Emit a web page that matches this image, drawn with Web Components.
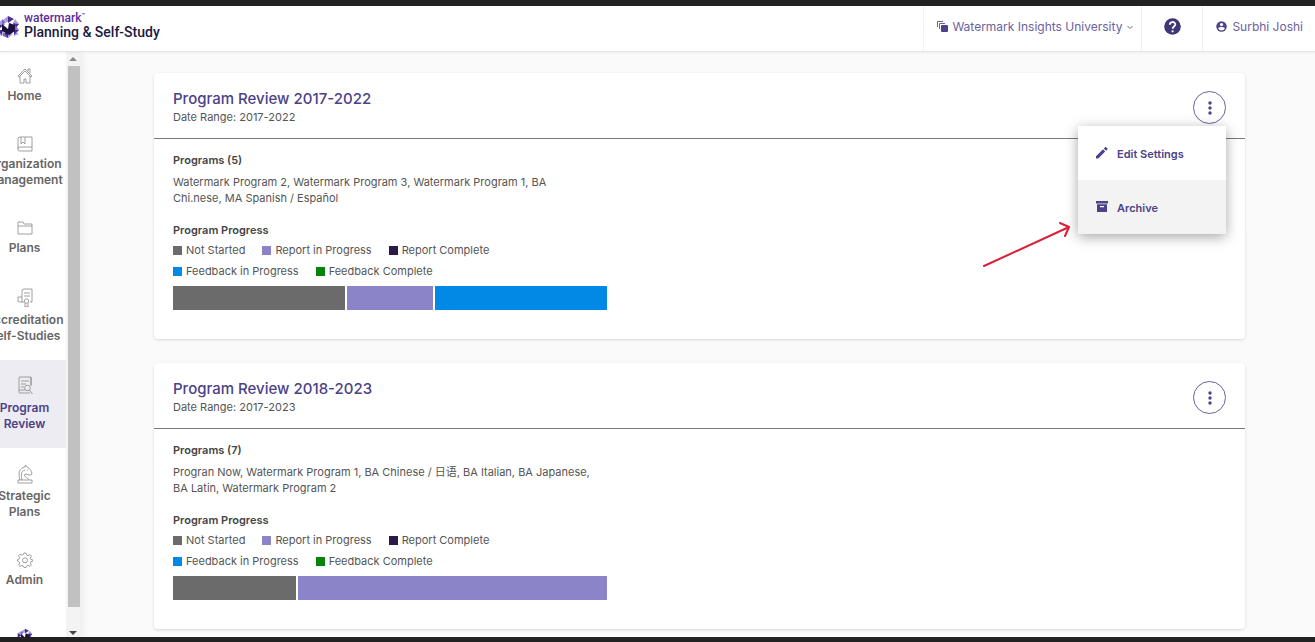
<!DOCTYPE html>
<html lang="en">
<head>
<meta charset="utf-8">
<meta name="viewport" content="width=device-width, initial-scale=1">
<title>Planning &amp; Self-Study</title>
<style>
    * {
        box-sizing: border-box;
    }

    body {
        margin: 0;
        font-family: Inter, "Noto Sans CJK SC", sans-serif;
        font-size: 12px;
        line-height: 16px;
        color: #555;
        --purple: #4b4288;
        --purple-light: #6a629e;
    }
</style>
</head>
<body>

<app-shell>
    <app-header slot="header" university="Watermark Insights University" user="Surbhi Joshi"></app-header>

    <side-nav slot="nav">
        <nav-item icon="home">Home</nav-item>
        <nav-item icon="book">Organization Management</nav-item>
        <nav-item icon="folder">Plans</nav-item>
        <nav-item icon="certificate" tall>Accreditation Self-Studies</nav-item>
        <nav-item icon="review" tall active>Program Review</nav-item>
        <nav-item icon="knight" tall>Strategic Plans</nav-item>
        <nav-item icon="gear">Admin</nav-item>
        <nav-item icon="logo" last></nav-item>
    </side-nav>

    <review-card title-text="Program Review 2017-2022" range="2017-2022" count="5" progress="not-started:2,report:1,feedback:2">
        <span slot="programs">Watermark Program 2, Watermark Program 3, Watermark Program 1, BA<br>Chi.nese, MA Spanish / Español</span>
        <action-menu slot="actions" open></action-menu>
        <arrow-note slot="note"></arrow-note>
    </review-card>

    <review-card title-text="Program Review 2018-2023" range="2017-2023" count="7" progress="not-started:2,report:5">
        <span slot="programs">Progran Now, Watermark Program 1, BA Chinese / 日语, BA Italian, BA Japanese,<br>BA Latin, Watermark Program 2</span>
        <action-menu slot="actions"></action-menu>
    </review-card>
</app-shell>

<script>
const logo = `
    <svg viewBox="0 0 24 24" width="100%" height="100%" aria-hidden="true">
        <path fill="#a79fd8" d="M7 5l5-4v7zM19 4l4 5-6-1zM1 8l5-3 1 6zM1 19l5-3v5zM18 16l5 3-5 2zM12 23l5-4-5-2z"/>
        <path fill="#4b2a96" d="M12 1l6 3-6 4zM17 8l6 1-4 5zM1 8l6 3-6 4zM7 15l-6 0 5 5zM12 23l-6-3 6-4zM18 14l5 1-5 5z"/>
        <path fill="#7d6bc0" d="M6 4l5 4-5 3zM19 10l4 5-5-1zM7 17l5 6-5-2z"/>
        <path fill="#1b0f3c" d="M6 9l6 5 1-6 6 2v6l-6 4-7-4z"/>
        <path fill="#fff" d="M8 8l4-1v5z"/>
    </svg>`;

const icons = {
    home: `<path d="M1 8l7-7 7 7-1 1-6-6-6 6zM3 8v7h4v-4h2v4h4V8M11 3V1h2v4"/>`,
    book: `<path d="M3 1h12v14H2.500a1.500 1.500 0 0 1-1.500-1.500V3a2 2 0 0 1 2-2zM4 1v7l2-2 2 2V1M15 11H3a2 2 0 0 0-2 2"/>`,
    folder: `<path d="M1 14V2h5l1 2h8v10zM1 6h14"/>`,
    certificate: `<path d="M7 14H2a1 1 0 0 1-1-1V9h4V3a2 2 0 0 1 2-2h8v13h-2M5 9v5M7 5h6M7 8h6"/><circle cx="9.500" cy="13" r="2.200"/><path d="M8 15v4l1.500-1 1.500 1v-4"/>`,
    review: `<path d="M14 9V1H3a1 1 0 0 0-1 1v14a1 1 0 0 0 1 1h10M14 1v9M4 5h8M4 8h5M4 11h3M2 14h6"/><circle cx="10.500" cy="12" r="2.800"/><path d="M12.500 14l3 4"/>`,
    knight: `<path d="M1 19v-3h14v3zM3 16c-2-7-1-12 5-13l.5-2 1.500 2c3 1 4 4 5 6l-1 2-2 0-3-1-2 1c1 2 4 3 5 5M5 16c-1-5-1-9 3-10M10 6h1"/>`,
    gear: `<path d="M7 1h2l.6 2 1.400.6L13 2.600 14.400 4l-1 2 .6 1.400 2 .6v1l-2 .6-.6 1.400 1 2-1.400 1.400-2-1-1.400.6L9 15.500H7L6.400 14 5 13.400l-2 1L1.600 13l1-2L2 9.600 0.500 9V7.500L2 7l.6-1.400-1-2L3 2.200l2 1L6.400 2.600z"/><circle cx="8" cy="8.300" r="2.500"/>`
};

class AppShell extends HTMLElement {

    constructor() {
        super();
        this.shadow = this.attachShadow({mode: 'open'});
        this.render();
    }

    render() {
        this.shadow.innerHTML = `
        <style>
            :host{
                display:flex;
                flex-direction:column;
                height:100vh;
                box-sizing:border-box;
                border-top:6px solid #222;
                border-bottom:5px solid #222;
                background-color:#fafafa;
            }

            .body{
                flex:1;
                min-height:0;
                display:flex;
            }

            main{
                flex:1;
                min-width:0;
                display:flex;
                flex-direction:column;
                gap:24px;
                padding:21px 70px 0 74px;
                overflow:hidden;
            }
        </style>

        <slot name="header"></slot>
        <div class="body">
            <slot name="nav"></slot>
            <main><slot></slot></main>
        </div>
        `;
    }
}

class AppHeader extends HTMLElement {

    constructor() {
        super();
        this.shadow = this.attachShadow({mode: 'open'});
        this.render();
    }

    render() {
        this.shadow.innerHTML = `
        <style>
            :host{
                display:flex;
                justify-content:space-between;
                height:46px;
                box-sizing:border-box;
                flex-shrink:0;
                background-color:#fff;
                border-bottom:1px solid #e6e6e6;
                box-shadow:0 1px 2px rgba(0,0,0,0.06);
                z-index:2;
                overflow:hidden;
            }

            .brand{
                display:flex;
                align-items:flex-start;
                gap:4px;
                padding-top:7px;
                margin-left:-4px;
                text-decoration:none;
                font-family:Roboto, sans-serif;
                color:#22183f;
            }

            .mark{
                width:24px;
                height:24px;
                margin-top:2px;
            }

            .name{
                display:flex;
                flex-direction:column;
                font-size:14px;
                font-weight:500;
                line-height:16px;
            }

            .name small{
                font-size:12px;
                line-height:11px;
                color:#5b2d9a;
            }

            .name sup{
                font-size:6px;
                line-height:0;
            }

            .tools{
                display:flex;
            }

            button{
                display:flex;
                align-items:center;
                gap:5px;
                border:0;
                border-left:1px solid #f0f0f0;
                background:none;
                font:inherit;
                color:var(--purple-light);
                padding:0 12px 4px 13px;
                white-space:nowrap;
                cursor:pointer;
            }

            .switch{
                gap:4px;
                padding-right:7px;
            }

            .help{
                padding:0 21px 4px 22px;
            }

            svg{
                flex-shrink:0;
            }
        </style>

        <a class="brand" href="#">
            <span class="mark">${logo}</span>
            <span class="name"><small>watermark<sup>™</sup></small>Planning &amp; Self-Study</span>
        </a>

        <div class="tools">
            <button class="switch" type="button">
                <svg width="11" height="11" viewBox="0 0 11 11"><path fill="none" stroke="#6a629e" d="M.5 6V.5H6M2.500 8V2.500H8"/><rect x="4" y="4" width="7" height="7" rx="1" fill="#4b4288"/></svg>
                <span>${this.getAttribute('university')}</span>
                <svg width="8" height="8" viewBox="0 0 8 8"><path fill="none" stroke="#6a629e" d="M1.500 3L4 5.500 6.500 3"/></svg>
            </button>
            <button class="help" type="button" aria-label="Help">
                <svg width="17" height="17" viewBox="0 0 17 17"><circle cx="8.500" cy="8.500" r="8.300" fill="#3f3679"/><path fill="none" stroke="#fff" stroke-width="1.800" d="M5.800 6.800c0-3.700 5.600-3.600 5.500-.3 0 1.900-2.700 2-2.700 4.200"/><circle cx="8.600" cy="13.300" r="1.100" fill="#fff"/></svg>
            </button>
            <button type="button">
                <svg width="11" height="11" viewBox="0 0 11 11"><circle cx="5.500" cy="5.500" r="5.200" fill="#4b4288"/><circle cx="5.500" cy="3.600" r="1.600" fill="#fff"/><path fill="#fff" d="M2 7q3.500-2 7 0-1 2.600-3.500 2.600T2 7z"/></svg>
                <span>${this.getAttribute('user')}</span>
            </button>
        </div>
        `;
    }
}

class SideNav extends HTMLElement {

    constructor() {
        super();
        this.shadow = this.attachShadow({mode: 'open'});
        this.render();
    }

    render() {
        this.shadow.innerHTML = `
        <style>
            :host{
                display:flex;
                flex-shrink:0;
                overflow:hidden;
                background-color:#fff;
                box-shadow:2px 0 8px rgba(0,0,0,0.07);
            }

            /* the list is scrolled a little to the right */
            nav{
                width:83px;
                margin-left:-17px;
                overflow:hidden;
            }

            .scrollbar{
                width:14px;
                display:flex;
                flex-direction:column;
                align-items:center;
                background-color:#f3f3f3;
            }

            .thumb{
                flex:1;
                width:12px;
                align-self:flex-end;
                background-color:#c1c1c1;
            }

            .up, .down{
                height:14px;
                display:flex;
                align-items:center;
            }

            .down{
                height:30px;
                align-items:flex-end;
            }
        </style>

        <nav><slot></slot></nav>
        <div class="scrollbar">
            <span class="up"><svg width="8" height="6"><path fill="#8a8a8a" d="M0 5l4-4 4 4z"/></svg></span>
            <span class="thumb"></span>
            <span class="down"><svg width="8" height="6"><path fill="#444" d="M0 0l4 4 4-4z"/></svg></span>
        </div>
        `;
    }
}

class NavItem extends HTMLElement {

    constructor() {
        super();
        this.shadow = this.attachShadow({mode: 'open'});
        this.render();
    }

    render() {
        let name = this.getAttribute('icon');
        let height = this.hasAttribute('tall') ? 20 : 16;
        let picture = name === 'logo' ? logo : `<svg width="16" height="${height}" viewBox="0 0 16 ${height}" fill="none" stroke="#888" stroke-width="0.8" aria-hidden="true">${icons[name]}</svg>`;

        this.shadow.innerHTML = `
        <style>
            :host{
                display:block;
                color:#666;
            }

            :host([active]){
                background-color:#edecf3;
                color:var(--purple);
            }

            :host([last]){
                padding-top:8px;
            }

            a{
                display:flex;
                flex-direction:column;
                align-items:center;
                gap:4px;
                padding:16px 0;
                color:inherit;
                text-decoration:none;
                text-align:center;
                font-weight:600;
            }

            .icon{
                width:16px;
                height:${height}px;
            }

            svg{
                display:block;
            }
        </style>

        <a href="#" ${name === 'logo' ? 'aria-label="Watermark"' : ''}>
            <span class="icon">${picture}</span>
            <span><slot></slot></span>
        </a>
        `;
    }
}

class ReviewCard extends HTMLElement {

    constructor() {
        super();
        this.shadow = this.attachShadow({mode: 'open'});
        this.render();
    }

    render() {
        let segments = this.getAttribute('progress').split(',').map(part => {
            let [kind, amount] = part.split(':');
            return `<span class="${kind}" style="flex-grow:${amount}"></span>`;
        }).join('');

        this.shadow.innerHTML = `
        <style>
            :host{
                display:block;
                position:relative;
                flex-shrink:0;
                background-color:#fff;
                border-radius:4px;
                box-shadow:0 1px 3px rgba(0,0,0,0.14);
                font-size:11px;
            }

            header{
                display:flex;
                justify-content:space-between;
                align-items:flex-start;
                padding:16px 19px 13px 19px;
                border-bottom:1px solid #77777f;
            }

            h2{
                margin:0;
                font-size:15px;
                line-height:20px;
                font-weight:500;
                color:var(--purple);
            }

            h3{
                margin:0;
                font-size:11px;
                font-weight:600;
                color:#444;
            }

            p{
                margin:0;
            }

            .content{
                max-width:434px;
                padding:13px 19px 29px 19px;
            }

            .programs{
                margin:6px 0 16px 0;
            }

            ul{
                display:flex;
                flex-wrap:wrap;
                gap:5px 17px;
                margin:4px 0 7px 0;
                padding:0;
                list-style:none;
            }

            li{
                display:flex;
                align-items:center;
                gap:4px;
            }

            li i{
                width:9px;
                height:9px;
            }

            .bar{
                display:flex;
                gap:2px;
                height:24px;
            }

            .bar span{
                flex-basis:0;
            }

            .not-started{ background-color:#6b6b6b; }
            .report{ background-color:#8c84c8; }
            .report-done{ background-color:#2b1a48; }
            .feedback{ background-color:#0288e5; }
            .feedback-done{ background-color:#078307; }
        </style>

        <header>
            <div>
                <h2>${this.getAttribute('title-text')}</h2>
                <p>Date Range: ${this.getAttribute('range')}</p>
            </div>
            <slot name="actions"></slot>
        </header>

        <div class="content">
            <h3>Programs (${this.getAttribute('count')})</h3>
            <p class="programs"><slot name="programs"></slot></p>
            <h3>Program Progress</h3>
            <ul>
                <li><i class="not-started"></i>Not Started</li>
                <li><i class="report"></i>Report in Progress</li>
                <li><i class="report-done"></i>Report Complete</li>
                <li><i class="feedback"></i>Feedback in Progress</li>
                <li><i class="feedback-done"></i>Feedback Complete</li>
            </ul>
            <div class="bar">${segments}</div>
        </div>

        <slot name="note"></slot>
        `;
    }
}

class ActionMenu extends HTMLElement {

    constructor() {
        super();
        this.shadow = this.attachShadow({mode: 'open'});
        this.render();
    }

    render() {
        this.shadow.innerHTML = `
        <style>
            :host{
                display:block;
                position:relative;
                padding-top:2px;
            }

            .toggle{
                display:flex;
                align-items:center;
                justify-content:center;
                width:33px;
                height:33px;
                padding:0;
                border:1px solid #6a629e;
                border-radius:50%;
                background-color:#fff;
                cursor:pointer;
            }

            .menu{
                display:none;
                position:absolute;
                top:100%;
                right:0;
                margin-top:2px;
                width:148px;
                background-color:#fff;
                box-shadow:0 3px 12px rgba(0,0,0,0.35);
                z-index:1;
            }

            :host([open]) .menu{
                display:block;
            }

            .menu button{
                display:flex;
                align-items:center;
                gap:9px;
                width:100%;
                height:54px;
                padding:2px 18px 0 18px;
                border:0;
                background:none;
                font:inherit;
                font-weight:600;
                color:var(--purple);
                cursor:pointer;
            }

            .menu button:last-child{
                background-color:#f3f3f3;
            }
        </style>

        <button class="toggle" type="button" aria-label="Actions">
            <svg width="4" height="14" viewBox="0 0 4 14" fill="#4b4288"><circle cx="2" cy="2" r="1.700"/><circle cx="2" cy="7" r="1.700"/><circle cx="2" cy="12" r="1.700"/></svg>
        </button>

        <div class="menu">
            <button type="button">
                <svg width="12" height="14" viewBox="0 0 12 14" fill="#4b4288"><path d="M0 9.300L7 2.300l2.200 2.200-7 7H0zM7.800 1.500L9.100.2a.7.7 0 0 1 1 0l1.300 1.300a.7.7 0 0 1 0 1L10.100 3.800z"/></svg>
                <span>Edit Settings</span>
            </button>
            <button type="button">
                <svg width="12" height="14" viewBox="0 0 12 14" fill="#4b4288"><path fill-rule="evenodd" d="M0 0h12v2.500H0zM1 3.300h10V11H1zM4 5v1.300h4V5z"/></svg>
                <span>Archive</span>
            </button>
        </div>
        `;

        this.shadow.querySelector(".toggle").addEventListener("click", () => {
            this.toggleAttribute("open");
        })
    }
}

class ArrowNote extends HTMLElement {

    constructor() {
        super();
        this.shadow = this.attachShadow({mode: 'open'});
        this.render();
    }

    render() {
        this.shadow.innerHTML = `
        <style>
            :host{
                display:block;
                position:absolute;
                top:148px;
                right:172px;
            }

            svg{
                display:block;
            }
        </style>

        <svg width="92" height="48" viewBox="0 0 92 48" fill="none" stroke="#dc2038" stroke-width="2" stroke-linecap="round" stroke-linejoin="round">
            <path d="M3 45L88 6M79 2l9 4-4 9"/>
        </svg>
        `;
    }
}

customElements.define('app-shell', AppShell);
customElements.define('app-header', AppHeader);
customElements.define('side-nav', SideNav);
customElements.define('nav-item', NavItem);
customElements.define('review-card', ReviewCard);
customElements.define('action-menu', ActionMenu);
customElements.define('arrow-note', ArrowNote);
</script>
</body>
</html>
